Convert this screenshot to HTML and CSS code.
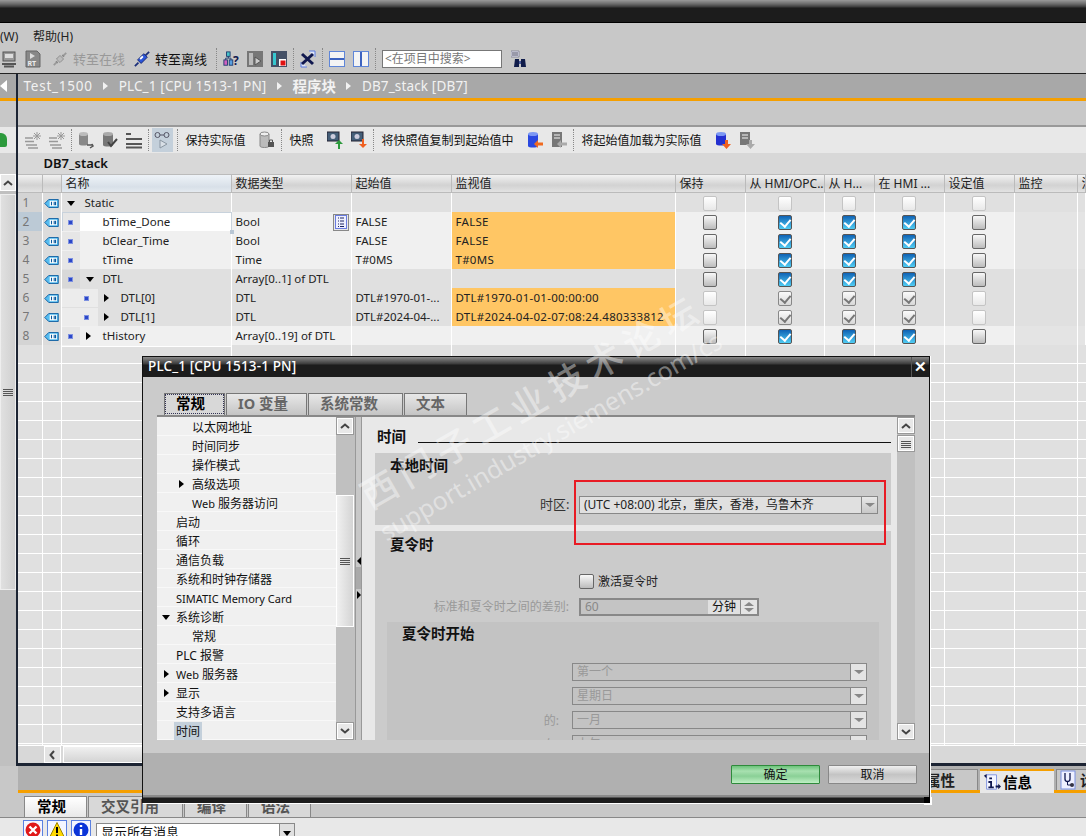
FILE: index.html
```html
<!DOCTYPE html>
<html lang="zh">
<head>
<meta charset="utf-8">
<title>DB7_stack</title>
<link rel="stylesheet" href="styles.css">
</head>
<body>
<svg class="sprite" aria-hidden="true">
  <symbol id="tag" viewBox="0 0 16 10"><path d="M.5 5 5 .5h10.500v9H5z" fill="#56bdf0" stroke="#0b5a9e"/><rect x="6" y="2" width="8" height="6" fill="#fff"/><path d="M8 3v4M11 3v4M12.500 3v4" stroke="#0b5a9e" stroke-width="1.200"/></symbol>
  <symbol id="save" viewBox="0 0 16 18"><rect x="2" y="2" width="12" height="9" fill="#999" stroke="#555"/><rect x="4" y="4" width="8" height="4" fill="#ddd"/><path d="M1 14h14M3 16.500h10" stroke="#555" stroke-width="2"/></symbol>
  <symbol id="rt" viewBox="0 0 16 18"><path d="M1 1h11l3 3v13H1z" fill="#888" stroke="#666"/><path d="M5 3l5 3-5 3z" fill="#ddd"/></symbol>
  <symbol id="plug-g" viewBox="0 0 18 18"><path d="M2 16l4-4M12 6l4-4" stroke="#999" stroke-width="2"/><path d="M5 9l4-4 4 4-4 4z" fill="#bbb" stroke="#888"/><path d="M6 12l-1 1M12 6l1-1" stroke="#888" stroke-width="3"/></symbol>
  <symbol id="plug-b" viewBox="0 0 18 18"><path d="M1 17l4-4M13 5l4-4" stroke="#1c2f7a" stroke-width="2"/><path d="M4 10l7-7 4 4-7 7z" fill="#2a54d8" stroke="#16246a"/><path d="M7 9l3-3" stroke="#fff" stroke-width="2"/></symbol>
  <symbol id="hier" viewBox="0 0 18 18"><rect x="4" y="1" width="4" height="5" fill="#46c2c8" stroke="#1d3a6e"/><rect x="1" y="10" width="4" height="6" fill="#d060c0" stroke="#1d3a6e"/><rect x="7" y="10" width="4" height="6" fill="#5aa0e0" stroke="#1d3a6e"/><path d="M6 6v2M3 10V8h6v2" stroke="#1d3a6e" fill="none"/></symbol>
  <symbol id="pane-g" viewBox="0 0 16 18"><rect width="16" height="16" y="1" fill="#777"/><rect x="2" y="3" width="4" height="12" fill="#bbb"/><path d="M8 7l6 4-6 4z" fill="#ccc" stroke="#555"/></symbol>
  <symbol id="pane-r" viewBox="0 0 16 18"><rect width="16" height="16" y="1" fill="#445066"/><rect x="2" y="3" width="3" height="12" fill="#36c8d0"/><rect x="8" y="9" width="7" height="7" fill="#fff"/><rect x="9.500" y="10.500" width="5" height="5" fill="#e01010"/></symbol>
  <symbol id="xwin" viewBox="0 0 16 18"><path d="M9 1h6v6M1 12v5h6" fill="#dfe6fa" stroke="#5a7adf"/><path d="M2 4l11 10M13 4 2 14" stroke="#10184f" stroke-width="3"/></symbol>
  <symbol id="hsplit" viewBox="0 0 16 18"><rect x=".5" y="1.500" width="15" height="15" fill="#f4f4f4" stroke="#5f86d8"/><path d="M1 9h14" stroke="#3d63c0" stroke-width="2"/></symbol>
  <symbol id="vsplit" viewBox="0 0 16 18"><rect x=".5" y="1.500" width="15" height="15" fill="#f4f4f4" stroke="#5f86d8"/><path d="M8 2v14" stroke="#3d63c0" stroke-width="2"/></symbol>
  <symbol id="binoc" viewBox="0 0 16 18"><path d="M0 1h8v6H0z" fill="#eef" stroke="#889"/><path d="M1 3h6M1 5h6" stroke="#445"/><path d="M4 9h4v8H3zM10 9h4l1 8h-5z" fill="#101c4a"/><path d="M8 11h2v3H8z" fill="#4a5a9a"/></symbol>
  <symbol id="spark" viewBox="0 0 16 18"><path d="M0 7h8M0 10.500h9M1 14h11M3 17h10" stroke="#999" stroke-width="1.500"/><path d="M12 1v8M8 5h8M9 2l6 6M15 2 9 8" stroke="#999"/></symbol>
  <symbol id="cyl-u" viewBox="0 0 16 18"><path d="M1 3v10c0 2 9 2 9 0V3z" fill="#888"/><ellipse cx="5.500" cy="3" rx="4.500" ry="2" fill="#bbb"/><path d="M9 14h5v-1l1 2-3 2" fill="none" stroke="#555" stroke-width="1.500"/></symbol>
  <symbol id="cyl-c" viewBox="0 0 16 18"><path d="M1 3v11c0 2 10 2 10 0V3z" fill="#777"/><ellipse cx="6" cy="3" rx="5" ry="2" fill="#aaa"/><path d="M6 11l3 4 6-7" fill="none" stroke="#444" stroke-width="2"/></symbol>
  <symbol id="lines" viewBox="0 0 16 18"><path d="M0 3h5M0 8h16M0 13h16M0 16.500h16" stroke="#555" stroke-width="1.800"/></symbol>
  <symbol id="glass" viewBox="0 0 16 18"><circle cx="3.500" cy="4" r="2.500" fill="none" stroke="#556"/><circle cx="12.500" cy="4" r="2.500" fill="none" stroke="#556"/><path d="M6 4h4" stroke="#556"/><path d="M6 9l7 4-7 4z" fill="#d8dfe6" stroke="#8a96a2"/></symbol>
  <symbol id="cyl-l" viewBox="0 0 16 18"><path d="M1 3v12c0 2 9 2 9 0V3z" fill="#bbb" stroke="#888"/><ellipse cx="5.500" cy="3" rx="4.500" ry="2" fill="#eee" stroke="#888"/><rect x="9" y="11" width="6" height="5" fill="#555"/><path d="M10.500 11V9h3v2" fill="none" stroke="#555"/></symbol>
  <symbol id="cam-u" viewBox="0 0 16 18"><rect y="1" width="12" height="9" fill="#445e78" stroke="#223"/><circle cx="6" cy="5.500" r="2.500" fill="#ccd"/><path d="M12 9l-4 4h3v5h2v-5h3z" fill="#2c9a3c"/></symbol>
  <symbol id="cam-d" viewBox="0 0 16 18"><rect y="1" width="12" height="9" fill="#445e78" stroke="#223"/><circle cx="6" cy="5.500" r="2.500" fill="#ccd"/><path d="M11 8h2v5h3l-4 4-4-4h3z" fill="#f06020"/></symbol>
  <symbol id="cyl-bl" viewBox="0 0 16 18"><path d="M1 3v12c0 2 10 2 10 0V3z" fill="#2a48e0"/><ellipse cx="6" cy="3" rx="5" ry="2" fill="#7c98f4"/><path d="M7 13l4-4v2.500h5v3h-5V17z" fill="#f06a20"/></symbol>
  <symbol id="cpu-gl" viewBox="0 0 16 18"><rect x="1" y="1" width="10" height="15" fill="#777"/><path d="M3 4h6M3 7h6" stroke="#ccc" stroke-width="1.500"/><path d="M6 13l4-4v2.500h6v3h-6V17z" fill="#aaa"/></symbol>
  <symbol id="cyl-bd" viewBox="0 0 16 18"><path d="M1 3v10c0 2 10 2 10 0V3z" fill="#2430d0"/><ellipse cx="6" cy="3" rx="5" ry="2" fill="#7c98f4"/><path d="M10 9h3v4h3l-4.500 5L7 13h3z" fill="#f06020"/></symbol>
  <symbol id="cpu-gd" viewBox="0 0 16 18"><rect x="1" y="1" width="10" height="13" fill="#777"/><path d="M3 4h6M3 7h6" stroke="#ccc" stroke-width="1.500"/><path d="M10 9h3v4h3l-4.500 5L7 13h3z" fill="#aaa"/></symbol>
  <symbol id="listb" viewBox="0 0 12 14"><rect x=".5" y=".5" width="11" height="13" fill="#eef0ff" stroke="#6a7ce0"/><path d="M3 3h1M5 3h4M3 6h1M5 6h4M3 9h1M5 9h4M3 11.500h1M5 11.500h4" stroke="#1c2460"/></symbol>
  <symbol id="info" viewBox="0 0 20 20"><path d="M4 2h11v16H4z" fill="#f4f6ff" stroke="#7a90e0"/><path d="M1 3l3-2v5zM14 14h3v-2l3 3-3 3v-2h-3zM7 5h3v2H7zM6 9h4v6h2v2H6v-2h2v-4H6z" fill="#10184f"/></symbol>
  <symbol id="diag" viewBox="0 0 18 20"><rect x="1" y="1" width="14" height="18" fill="#eef0ff" stroke="#7a90e0"/><path d="M5 3v6a2.500 2.500 0 0 0 5 0V3" fill="none" stroke="#10184f" stroke-width="1.300"/><path d="M7.500 12v3h4" fill="none" stroke="#10184f"/><circle cx="12" cy="15" r="2" fill="#334"/></symbol>
  <symbol id="err" viewBox="0 0 16 16"><circle cx="8" cy="8" r="7.500" fill="#e01818"/><path d="M4.500 4.500l7 7M11.500 4.500l-7 7" stroke="#fff" stroke-width="2.400"/></symbol>
  <symbol id="warn" viewBox="0 0 16 16"><path d="M8 .5 15.500 15.500H.5z" fill="#ffd900" stroke="#a08800"/><path d="M8 5v6M8 12.500v2" stroke="#000" stroke-width="2"/></symbol>
  <symbol id="inf" viewBox="0 0 16 16"><circle cx="8" cy="8" r="7.500" fill="#0a34d8"/><path d="M8 3v2M8 7v6" stroke="#fff" stroke-width="2.400"/></symbol>
  <symbol id="chev-u" viewBox="0 0 10 6"><path d="M1 5l4-3.500L9 5" fill="none" stroke="#444" stroke-width="2"/></symbol>
  <symbol id="chev-d" viewBox="0 0 10 6"><path d="M1 1l4 3.500L9 1" fill="none" stroke="#444" stroke-width="2"/></symbol>
  <symbol id="chev-l" viewBox="0 0 6 10"><path d="M5 1 1.500 5 5 9" fill="none" stroke="#444" stroke-width="2"/></symbol>
  <symbol id="grip" viewBox="0 0 10 8"><path d="M0 1.500h10M0 3.500h10M0 5.500h10M0 7.500h10" stroke="#555"/></symbol>
</svg>

<header class="titlebar"></header>
<nav class="menubar"><span class="menu-w">(W)</span><span class="menu-h">帮助(H)</span></nav>
<div class="maintools">
  <svg class="ic ml2"><use href="#save"/></svg>
  <svg class="ic"><use href="#rt"/><text x="2.500" y="16" class="svgt">RT</text></svg>
  <svg class="ic ml3"><use href="#plug-g"/></svg>
  <span class="tt dim">转至在线</span>
  <svg class="ic ml1"><use href="#plug-b"/></svg>
  <span class="tt">转至离线</span>
  <i class="sep"></i>
  <svg class="ic"><use href="#hier"/><text x="10" y="15" class="svgq">?</text></svg>
  <svg class="ic"><use href="#pane-g"/></svg>
  <svg class="ic"><use href="#pane-r"/></svg>
  <i class="sep"></i>
  <svg class="ic"><use href="#xwin"/></svg>
  <i class="sep"></i>
  <svg class="ic"><use href="#hsplit"/></svg>
  <svg class="ic"><use href="#vsplit"/></svg>
  <i class="sep"></i>
  <div class="search">&lt;在项目中搜索&gt;</div>
  <svg class="ic"><use href="#binoc"/></svg>
</div>

<div class="work">
  <aside class="rail">
    <div class="rail-crumb"><i class="tri-l"></i></div>
    <div class="rail-band"></div>
    <div class="rail-tools"><i class="rail-green"></i></div>
    <div class="rail-name"></div>
    <div class="rail-btn"><svg class="chev"><use href="#chev-u"/></svg></div>
    <div class="rail-thumb"><svg class="grip"><use href="#grip"/></svg></div>
  </aside>
  <main class="editor">
    <div class="crumb">
      <span class="crumb-first">Test_1500</span><i class="tri-w"></i>
      <span>PLC_1 [CPU 1513-1 PN]</span><i class="tri-w"></i>
      <span class="crumb-cn">程序块</span><i class="tri-w"></i>
      <span>DB7_stack [DB7]</span>
    </div>
    <div class="band"></div>
    <div class="edtools">
      <svg class="ic"><use href="#spark"/></svg>
      <svg class="ic"><use href="#spark"/></svg>
      <i class="sep"></i>
      <svg class="ic"><use href="#cyl-u"/></svg>
      <svg class="ic"><use href="#cyl-c"/></svg>
      <svg class="ic"><use href="#lines"/></svg>
      <i class="sep"></i>
      <span class="active-btn"><svg class="ic"><use href="#glass"/></svg></span>
      <i class="sep"></i>
      <span class="et">保持实际值</span>
      <svg class="ic ml4"><use href="#cyl-l"/></svg>
      <i class="sep"></i>
      <span class="et">快照</span>
      <svg class="ic ml4"><use href="#cam-u"/></svg>
      <svg class="ic"><use href="#cam-d"/></svg>
      <i class="sep"></i>
      <span class="et">将快照值复制到起始值中</span>
      <svg class="ic ml4"><use href="#cyl-bl"/></svg>
      <svg class="ic"><use href="#cpu-gl"/></svg>
      <i class="sep"></i>
      <span class="et">将起始值加载为实际值</span>
      <svg class="ic ml4"><use href="#cyl-bd"/></svg>
      <svg class="ic"><use href="#cpu-gd"/></svg>
    </div>
    <div class="dbname">DB7_stack</div>

    <div class="table">
      <div class="row head">
        <div></div><div></div><div class="hl">名称</div><div>数据类型</div><div>起始值</div><div>监视值</div><div>保持</div><div>从 HMI/OPC...</div><div>从 H...</div><div>在 HMI ...</div><div>设定值</div><div>监控</div><div>注</div>
      </div>
      <div class="row dark">
        <div class="no">1</div><div class="tg"><svg class="tag"><use href="#tag"/></svg></div>
        <div class="n"><span class="slot"><i class="tri-d"></i></span><span class="t0">Static</span></div>
        <div></div><div></div><div></div>
        <div class="c"><b class="cb off"></b></div><div class="c"><b class="cb off"></b></div><div class="c"><b class="cb off"></b></div><div class="c"><b class="cb off"></b></div><div class="c"><b class="cb off"></b></div><div></div><div></div>
      </div>
      <div class="row light sel">
        <div class="no">2</div><div class="tg"><svg class="tag"><use href="#tag"/></svg></div>
        <div class="n focus"><span class="slot sq"><i class="dot"></i></span><span class="t1">bTime_Done</span><i class="handle"></i></div>
        <div class="ty"><span>Bool</span><span class="pick"><svg class="listb"><use href="#listb"/></svg></span></div><div>FALSE</div><div class="mon">FALSE</div>
        <div class="c"><b class="cb"></b></div><div class="c"><b class="cb on"></b></div><div class="c"><b class="cb on"></b></div><div class="c"><b class="cb on"></b></div><div class="c"><b class="cb"></b></div><div class="x"></div><div class="x"></div>
      </div>
      <div class="row light">
        <div class="no">3</div><div class="tg"><svg class="tag"><use href="#tag"/></svg></div>
        <div class="n"><span class="slot sq"><i class="dot"></i></span><span class="t1">bClear_Time</span></div>
        <div>Bool</div><div>FALSE</div><div class="mon">FALSE</div>
        <div class="c"><b class="cb"></b></div><div class="c"><b class="cb on"></b></div><div class="c"><b class="cb on"></b></div><div class="c"><b class="cb on"></b></div><div class="c"><b class="cb"></b></div><div class="x"></div><div class="x"></div>
      </div>
      <div class="row light">
        <div class="no">4</div><div class="tg"><svg class="tag"><use href="#tag"/></svg></div>
        <div class="n"><span class="slot sq"><i class="dot"></i></span><span class="t1">tTime</span></div>
        <div>Time</div><div>T#0MS</div><div class="mon">T#0MS</div>
        <div class="c"><b class="cb"></b></div><div class="c"><b class="cb on"></b></div><div class="c"><b class="cb on"></b></div><div class="c"><b class="cb on"></b></div><div class="c"><b class="cb"></b></div><div class="x"></div><div class="x"></div>
      </div>
      <div class="row dark">
        <div class="no">5</div><div class="tg"><svg class="tag"><use href="#tag"/></svg></div>
        <div class="n"><span class="slot sq"><i class="dot"></i></span><span class="tw"><i class="tri-d"></i></span><span class="t2">DTL</span></div>
        <div>Array[0..1] of DTL</div><div></div><div></div>
        <div class="c"><b class="cb"></b></div><div class="c"><b class="cb on"></b></div><div class="c"><b class="cb on"></b></div><div class="c"><b class="cb on"></b></div><div class="c"><b class="cb"></b></div><div></div><div></div>
      </div>
      <div class="row dark">
        <div class="no">6</div><div class="tg"><svg class="tag"><use href="#tag"/></svg></div>
        <div class="n"><span class="slot deep"><i class="dot"></i></span><span class="tw"><i class="tri-r"></i></span><span class="t2">DTL[0]</span></div>
        <div>DTL</div><div>DTL#1970-01-...</div><div class="mon">DTL#1970-01-01-00:00:00</div>
        <div class="c"><b class="cb off"></b></div><div class="c"><b class="cb tick"></b></div><div class="c"><b class="cb tick"></b></div><div class="c"><b class="cb tick"></b></div><div class="c"><b class="cb off"></b></div><div></div><div></div>
      </div>
      <div class="row dark">
        <div class="no">7</div><div class="tg"><svg class="tag"><use href="#tag"/></svg></div>
        <div class="n"><span class="slot deep"><i class="dot"></i></span><span class="tw"><i class="tri-r"></i></span><span class="t2">DTL[1]</span></div>
        <div>DTL</div><div>DTL#2024-04-...</div><div class="mon">DTL#2024-04-02-07:08:24.480333812</div>
        <div class="c"><b class="cb off"></b></div><div class="c"><b class="cb tick"></b></div><div class="c"><b class="cb tick"></b></div><div class="c"><b class="cb tick"></b></div><div class="c"><b class="cb off"></b></div><div></div><div></div>
      </div>
      <div class="row light">
        <div class="no">8</div><div class="tg"><svg class="tag"><use href="#tag"/></svg></div>
        <div class="n"><span class="slot sq"><i class="dot"></i></span><span class="tw"><i class="tri-r"></i></span><span class="t2">tHistory</span></div>
        <div>Array[0..19] of DTL</div><div></div><div></div>
        <div class="c"><b class="cb"></b></div><div class="c"><b class="cb on"></b></div><div class="c"><b class="cb on"></b></div><div class="c"><b class="cb on"></b></div><div class="c"><b class="cb"></b></div><div class="x"></div><div class="x"></div>
      </div>
      <div class="filler"></div>
    </div>
    <div class="hscroll"><span class="hbtn"><svg class="chev-l"><use href="#chev-l"/></svg></span><span class="hthumb"></span></div>
  </main>
</div>

<section class="bottom">
  <div class="btabs-top">
    <span class="rtab first">属性</span>
    <span class="rtab cur"><svg class="rtab-ic"><use href="#info"/></svg>信息</span>
    <span class="rtab last"><svg class="rtab-ic"><use href="#diag"/></svg>诊断</span>
  </div>
  <div class="btabs">
    <span class="btab cur">常规</span><span class="btab w95">交叉引用</span><span class="btab">编译</span><span class="btab">语法</span>
  </div>
  <div class="filter">
    <span class="fbtn"><svg class="fic"><use href="#err"/></svg></span>
    <span class="fbtn"><svg class="fic"><use href="#warn"/></svg></span>
    <span class="fbtn"><svg class="fic"><use href="#inf"/></svg></span>
    <span class="fsel">显示所有消息</span><span class="farrow"><i class="tri-d"></i></span>
  </div>
</section>

<div class="dialog">
  <div class="dlg-title"><span>PLC_1 [CPU 1513-1 PN]</span><span class="dlg-x">✕</span></div>
  <div class="dlg-tabs">
    <span class="dtab cur">常规</span><span class="dtab w81">IO 变量</span><span class="dtab w95">系统常数</span><span class="dtab w63">文本</span>
  </div>
  <div class="dlg-body">
    <ul class="tree">
      <li class="l2">以太网地址</li>
      <li class="l2">时间同步</li>
      <li class="l2">操作模式</li>
      <li class="l2"><i class="tri-r"></i>高级选项</li>
      <li class="l2"><span class="lat">Web</span> 服务器访问</li>
      <li class="l1">启动</li>
      <li class="l1">循环</li>
      <li class="l1">通信负载</li>
      <li class="l1">系统和时钟存储器</li>
      <li class="l1 lat">SIMATIC Memory Card</li>
      <li class="l1"><i class="tri-d"></i>系统诊断</li>
      <li class="l2">常规</li>
      <li class="l1">PLC 报警</li>
      <li class="l1"><i class="tri-r"></i><span class="lat">Web</span> 服务器</li>
      <li class="l1"><i class="tri-r"></i>显示</li>
      <li class="l1">支持多语言</li>
      <li class="l1"><span class="cursel">时间</span></li>
    </ul>
    <div class="vscroll tree-scroll">
      <span class="sbtn"><svg class="chev"><use href="#chev-u"/></svg></span>
      <span class="sthumb"><svg class="grip"><use href="#grip"/></svg></span>
      <span class="sbtn"><svg class="chev"><use href="#chev-d"/></svg></span>
    </div>
    <div class="splitter"><i class="s-l"></i><i class="s-line"></i><i class="s-r"></i></div>
    <div class="content">
      <div class="heading"><span>时间</span><i></i></div>
      <div class="sec sec1">
        <h3>本地时间</h3>
        <div class="tzrow"><label>时区:</label><div class="drop tz"><span class="dtext">(UTC +08:00) 北京，重庆，香港，乌鲁木齐</span><span class="darrow"><i class="tri-g"></i></span></div></div>
      </div>
      <div class="sec sec2">
        <h3>夏令时</h3>
        <div class="dstrow"><b class="cb big"></b><span>激活夏令时</span></div>
        <div class="diffrow"><label>标准和夏令时之间的差别:</label><div class="spin"><span class="val">60</span><span class="unit">分钟</span><span class="updown"><i class="tri-gu"></i><i class="tri-g"></i></span></div></div>
        <div class="sub">
          <h3>夏令时开始</h3>
          <div class="drow"><div class="drop dis"><span class="dtext">第一个</span><span class="darrow"><i class="tri-g"></i></span></div></div>
          <div class="drow"><div class="drop dis"><span class="dtext">星期日</span><span class="darrow"><i class="tri-g"></i></span></div></div>
          <div class="drow"><label>的:</label><div class="drop dis"><span class="dtext">一月</span><span class="darrow"><i class="tri-g"></i></span></div></div>
          <div class="drow"><label>在:</label><div class="drop dis"><span class="dtext">上午</span><span class="darrow"><i class="tri-g"></i></span></div></div>
        </div>
      </div>
    </div>
    <div class="vscroll cont-scroll">
      <span class="sbtn"><svg class="chev"><use href="#chev-u"/></svg></span>
      <span class="sbtn"><svg class="grip"><use href="#grip"/></svg></span>
      <span class="sfill"></span>
      <span class="sbtn"><svg class="chev"><use href="#chev-d"/></svg></span>
    </div>
  </div>
  <div class="dlg-gap"></div>
  <div class="dlg-foot"><span class="btn ok">确定</span><span class="btn">取消</span></div>
  <div class="dlg-bar"></div>
  <i class="resize"></i>
</div>

<div class="redbox"></div>
<div class="wm wm-cn">西门子工业 技术论坛</div>
<div class="wm wm-en">support.industry.siemens.com/cs</div>
</body>
</html>
```
FILE: styles.css
```css
*{box-sizing:border-box}
html,body{margin:0;height:836px;overflow:hidden}
body{position:relative;width:1086px;background:#c8c8c8;font:11.5px/19px "Noto Sans","Noto Sans CJK SC",sans-serif;color:#222;display:flex;flex-direction:column}
.sprite{position:absolute;width:0;height:0}
i,b{font-style:normal;font-weight:normal}
h3{margin:0;font-size:14.500px;font-weight:700;color:#111;line-height:20px}
ul{margin:0;padding:0;list-style:none}
.svgt{font:bold 7px "Noto Sans",sans-serif;fill:#eee}
.svgq{font:bold 12px "Noto Sans",sans-serif;fill:#10184f}

.titlebar{height:23px;flex:none;background:linear-gradient(#9a9a9a 0,#6a6a6a 4px,#3a3a3a 7px,#1c1c1c 8px);border-bottom:1px solid #000}
.menubar{height:24px;flex:none;display:flex;align-items:center;font-size:12px;color:#222;padding-top:3px}
.menu-w{width:33px}
.maintools{height:27px;flex:none;display:flex;align-items:center;gap:8px;border-bottom:1px solid #222;padding-bottom:2px}
.ic{width:16px;height:18px;flex:none}
.ml1{margin-left:-2px}.ml2{margin-left:1px}.ml3{margin-left:3px}.ml4{margin-left:4px}
.tt{font-size:13px;color:#111;width:52px;margin:0 3px 0 -3px;white-space:nowrap}
.dim{color:#999}
.sep{width:1px;height:22px;flex:none;margin:0 -2px;border-left:1px dotted #888}
.search{width:120px;height:18px;background:#fff;border:1px solid #777;font-size:12px;line-height:16px;color:#777;padding-left:2px;margin-right:1px;white-space:nowrap}

.work{height:692px;flex:none;display:flex}
.rail{width:17.500px;flex:none;border-right:2.500px solid #1c2433;background:#c0c0c0;display:flex;flex-direction:column}
.rail-crumb{height:24px;background:#a8a8a8;display:flex;align-items:center}
.rail-band{height:29px;background:#c8c8c8;border-top:3px solid #f59f00}
.rail-tools{height:26px;background:#e8e8e8;position:relative;overflow:hidden}
.rail-green{position:absolute;left:-6px;top:6px;width:13px;height:14px;background:#2c9a3c;border-radius:6px 6px 2px 2px}
.rail-name{height:21px;background:#d0d0d0}
.rail-btn{height:17px;background:#e8e8e8;border:1px solid #fff;display:flex;align-items:center;justify-content:center}
.rail-thumb{margin-top:3px;height:396px;border:1px solid #eee;background:linear-gradient(90deg,#e0e0e0,#d0d0d0);display:flex;align-items:center;justify-content:center}
.chev{width:10px;height:6px}
.chev-l{width:6px;height:10px}
.grip{width:10px;height:8px}
.tri-l{border:solid transparent;border-width:6px 7px 6px 0;border-right-color:#fff}

.editor{flex:1;min-width:0;display:flex;flex-direction:column}
.crumb{height:24px;flex:none;background:#a8a8a8;color:#f2f2f2;font-size:13.500px;letter-spacing:.15px;line-height:24px;display:flex;align-items:center;padding-left:6px;white-space:nowrap}
.crumb-first{letter-spacing:.75px}
.crumb-cn{font-weight:700;font-size:14.500px;letter-spacing:0}
.tri-w{border:solid transparent;border-width:4px 0 4px 5px;border-left-color:#f2f2f2;margin:0 10.500px}
.band{height:29px;flex:none;background:#c8c8c8;border-top:3px solid #f59f00;border-bottom:2px solid #999}
.edtools{height:26px;flex:none;background:#e8e8e8;display:flex;align-items:center;gap:8px;padding-left:7px}
.active-btn{width:21px;height:24px;background:#c4d0db;display:flex;align-items:center;justify-content:center;margin:0 -2px 0 -3px}
.et{font-size:12px;white-space:nowrap;color:#111;margin:0 1px 0 2px}
.dbname{height:21px;flex:none;background:#d8d8d8;font-size:13px;font-weight:600;color:#111;line-height:20px;padding-left:26px}

.table{flex:1;min-height:0;overflow:hidden;background:#e0e0e0;display:flex;flex-direction:column}
.row{height:19px;flex:none;display:grid;grid-template-columns:25px 19px 170px 120px 100px 224px 70px 79px 50px 70px 70px 63px 1fr;line-height:20px}
.row>div{border-right:1px solid #fff;border-bottom:1px solid #fff;padding-left:4px;white-space:nowrap;overflow:hidden;min-width:0}
.head{height:19px;font-size:12px;color:#222}
.head>div{background:linear-gradient(#f2f2f2,#d2d2d2 60%,#e2e2e2);border-right-color:#bbb;border-bottom-color:#bbb;border-top:1px solid #bbb;line-height:17px}
.head>.hl{background:linear-gradient(#eef3f8,#d8e0e8 70%,#e4eaf0);padding-left:4px}
.dark>div{background:#e0e0e0}
.light>div{background:#f0f0f0}
.light>.x{background:#e4e4e4}
.row>.no{background:#d4d4d4;color:#777;padding-left:5px;font-size:12px}
.sel>.no{background:#bccad6}
.row>.tg{background:#dcdcdc;padding:6px 0 0 1px}
.tag{width:15px;height:9px;display:block}
.row>.n{display:flex;align-items:center;padding:0;overflow:visible;position:relative}
.slot{width:18px;height:18px;flex:none;display:flex;align-items:center;justify-content:center}
.sq{background:#e6e6e6}
.dark .sq{background:#d8d8d8}
.deep{width:36px;background:#ececec;justify-content:flex-end;padding-right:8px}
.dot{width:5px;height:5px;background:#2b47c8;border:1px solid #7d90e0;margin-right:1px}
.tw{width:5px;flex:none;margin-left:6px;display:flex}
.t0{margin-left:5px}
.t1{margin-left:5px;padding-left:18px}
.t2{margin-left:12px}
.tri-d{border:solid transparent;border-width:5px 4px 0;border-top-color:#000;display:block}
.tri-r{border:solid transparent;border-width:4px 0 4px 5px;border-left-color:#000;display:block}
.row>.focus{background:#fff;outline:1px solid #c8d2dc;outline-offset:-1px}
.handle{position:absolute;right:-3px;bottom:-2px;width:4px;height:4px;background:#b8c6d4;z-index:1}
.ty{display:flex;align-items:center;justify-content:space-between;padding-right:2px}
.pick{width:16px;height:17px;border:1px solid #888;background:#e8e8e8;display:flex;align-items:center;justify-content:center}
.listb{width:12px;height:14px}
.row>.mon{background:#ffc664;letter-spacing:.27px}
.row>.c{padding:1px 0 0;display:flex;align-items:center;justify-content:center}
.cb{display:block;width:14px;height:15px;border:1px solid #666;border-radius:2px;background:linear-gradient(#f8f8f8,#bcbcbc);position:relative}
.cb.off{border-color:#c4c4c4;background:linear-gradient(#fff,#e8e8e8)}
.cb.on{border-color:#555;background:linear-gradient(#0f62b4,#50cdf4)}
.cb.tick{border-color:#888;background:linear-gradient(#fafafa,#d8d8d8)}
.cb.on::after,.cb.tick::after{content:"";position:absolute;left:3px;top:1px;width:5px;height:8px;border:solid #fff;border-width:0 2px 2px 0;transform:rotate(40deg)}
.cb.tick::after{border-color:#777}
.cb.big{width:15px;height:15px}
.filler{flex:1;background:
  linear-gradient(#fff,#fff) 24px 0/1px 100% no-repeat,
  linear-gradient(#fff,#fff) 43px 0/1px 100% no-repeat,
  linear-gradient(#fff,#fff) 213px 0/1px 100% no-repeat,
  linear-gradient(#fff,#fff) 333px 0/1px 100% no-repeat,
  linear-gradient(#fff,#fff) 433px 0/1px 100% no-repeat,
  linear-gradient(#fff,#fff) 657px 0/1px 100% no-repeat,
  linear-gradient(#fff,#fff) 727px 0/1px 100% no-repeat,
  linear-gradient(#fff,#fff) 806px 0/1px 100% no-repeat,
  linear-gradient(#fff,#fff) 856px 0/1px 100% no-repeat,
  linear-gradient(#fff,#fff) 926px 0/1px 100% no-repeat,
  linear-gradient(#fff,#fff) 996px 0/1px 100% no-repeat,
  linear-gradient(#fff,#fff) 1059px 0/1px 100% no-repeat,
  repeating-linear-gradient(#e0e0e0 0 18px,#fff 18px 19px)}
.hscroll{height:21px;flex:none;background:#d8d8d8;border-top:1px solid #fff;border-bottom:3px solid #1c2433;display:flex;padding-left:26px;gap:2px}
.hbtn{width:17px;height:17px;background:#e4e4e4;border:1px solid #fff;display:flex;align-items:center;justify-content:center}
.hthumb{width:300px;height:17px;background:linear-gradient(#f0f0f0,#d4d4d4);border:1px solid #fff}

.bottom{height:70px;flex:none;background:#c8c8c8;display:flex;flex-direction:column}
.btabs-top{height:27px;flex:none;margin-left:18px;background:#b0b0b0;border-bottom:3px solid #f59f00;display:flex;justify-content:flex-end;align-items:flex-end;gap:2px;padding-top:3px}
.rtab{height:21px;width:74px;background:#c8c8c8;border:1px solid #888;border-bottom:0;font-size:14.500px;font-weight:700;display:flex;align-items:center;gap:2px;padding-left:3px;color:#222;overflow:hidden;white-space:nowrap;flex:none}
.rtab.first{width:70px;padding-left:17px}
.rtab.last{width:75px;margin-right:-45px}
.rtab.cur{height:24px;margin-bottom:-3px;background:#e8e8e8;border:0;border-top:2px solid #f59f00;color:#000}
.rtab-ic{width:18px;height:20px;flex:none}
.btabs{height:24px;flex:none;display:flex;padding:3px 0 0 24px;gap:1px}
.btab{width:63px;height:21px;background:#d8d8d8;border:1px solid #888;border-bottom:0;font-size:14.500px;font-weight:700;padding-left:12px;color:#555;line-height:18px}
.btab.w95{width:95px}
.btab.cur{background:linear-gradient(#fff,#e8e8e8);color:#000}
.filter{flex:1;background:#e8e8e8;border-top:1px solid #888;display:flex;gap:4px;padding:2px 0 0 23px}
.fbtn{width:20px;height:20px;border:1px solid #5a80e0;background:#f4f6ff;display:flex;align-items:center;justify-content:center;flex:none}
.fic{width:16px;height:16px}
.fsel{width:184px;height:20px;margin:3px 0 0 1px;background:#fff;border:1px solid #888;font-size:13px;line-height:16px;padding-left:4px;color:#111;white-space:nowrap}
.farrow{width:16px;height:20px;margin:3px 0 0 -5px;background:#e0e0e0;border:1px solid #888;display:flex;align-items:center;justify-content:center}

.dialog{position:absolute;left:142px;top:356px;width:788px;height:448px;background:#cbcbcb;border:1px solid #111;border-bottom-color:#fff;box-shadow:1px 0 #fff;display:flex;flex-direction:column}
.dlg-title{height:20px;flex:none;background:linear-gradient(#8a8a8a 0,#3a3a3a 7px,#1c1c1c 8px);color:#fff;font-size:13.500px;letter-spacing:.15px;font-weight:500;line-height:19px;padding-left:5px;display:flex;justify-content:space-between}
.dlg-x{width:18px;border-left:1px solid #555;font-size:15px;font-weight:700;text-align:center}
.dlg-tabs{height:38px;flex:none;display:flex;align-items:flex-end;padding-left:21px;gap:1px}
.dtab{width:61px;height:22px;background:linear-gradient(#e8e8e8,#c4c4c4);border:1px solid #777;border-bottom:0;font-size:14.500px;font-weight:700;color:#666;padding-left:11px;line-height:19px;white-space:nowrap}
.dtab.cur{background:#d8d8d8;color:#000;outline:1px dotted #335;outline-offset:-2px}
.w81{width:81px}.dtab.w95{width:95px}.w63{width:63px}
.dlg-body{height:325px;flex:none;margin:0 14px;width:758px;border-top:2px solid #888;display:flex;overflow:hidden}
.tree{width:179px;flex:none;background:#f0f0f0;font-size:12px;color:#111}
.tree li{height:19px;border-bottom:1px solid #f8f8f8;line-height:21px;white-space:nowrap;position:relative}
.tree .lat{font-size:11px}
.tree .l1{padding-left:19px}
.tree .l2{padding-left:35px}
.tree .tri-r,.tree .tri-d{position:absolute;top:6px}
.tree .l2 .tri-r{left:22px}
.tree .l1 .tri-r{left:7px}
.tree .l1 .tri-d{left:5px;top:8px}
.cursel{background:#c4d0db;display:inline-block;height:18px;line-height:19px;padding:0 2px;margin-left:-2px}
.vscroll{width:18px;flex:none;background:#c0c0c0;display:flex;flex-direction:column}
.sbtn{height:18px;flex:none;background:#e8e8e8;border:1px solid #999;outline:1px solid #fff;outline-offset:-2px;display:flex;align-items:center;justify-content:center}
.tree-scroll{width:19px;justify-content:space-between;padding-right:1px}
.sthumb{height:132px;margin-top:59px;margin-bottom:95px;background:linear-gradient(90deg,#f0f0f0,#d4d4d4);border:1px solid #fff;display:flex;align-items:center;justify-content:center;flex:none}
.splitter{width:7px;flex:none;background:#c8c8c8;border:solid #999;border-width:0 1px;display:flex;flex-direction:column;align-items:center;padding-top:140px}
.s-l{border:solid transparent;border-width:4px 4px 4px 0;border-right-color:#000;display:block}
.s-line{display:block;width:5px;height:22px;margin:2px 0;background:#aaa}
.s-r{border:solid transparent;border-width:4px 0 4px 4px;border-left-color:#000;display:block}
.content{width:535px;flex:none;background:#e8e8e8;padding:0 6px 0 13px;overflow:hidden}
.heading{height:36px;display:flex;align-items:flex-end;padding-bottom:7px;font-size:14.500px;font-weight:700;color:#111;line-height:20px;padding-left:2px}
.heading i{flex:1;height:1px;background:#111;margin:0 0 0 12px;position:relative;top:-3px}
.sec{background:#cbcbcb}
.sec h3{padding-left:15px}
.sec1{height:72px;padding-top:2px;margin-bottom:6px}
.sec1 .tzrow{margin-top:20px}
.tzrow{display:flex;align-items:center;padding-left:165px;font-size:13px;color:#333}
.tzrow label{width:39px}
.drop{height:18px;background:#e0e0e0;border:1px solid #888;display:flex;align-items:stretch;font-size:12px}
.tz{width:299px}
.dtext{flex:1;padding-left:4px;line-height:16px;white-space:nowrap;color:#222}
.darrow{width:16px;flex:none;background:linear-gradient(#e8e8e8,#c8c8c8);border-left:1px solid #888;display:flex;align-items:center;justify-content:center}
.tri-g{border:solid transparent;border-width:4px 5px 0;border-top-color:#888;display:block}
.tri-gu{border:solid transparent;border-width:0 5px 4px;border-bottom-color:#888;display:block;margin-bottom:2px}
.sec2{height:300px;padding-top:3px}
.dstrow{display:flex;align-items:center;gap:4px;padding-left:204px;margin-top:19px;font-size:12px;height:17px;color:#222}
.diffrow{display:flex;align-items:center;margin-top:7px;font-size:12px;color:#999}
.diffrow label{width:194px;text-align:right;margin-right:10px;white-space:nowrap}
.spin{width:180px;height:18px;border:2px solid #888;display:flex;background:#c4c4c4;color:#888}
.val{flex:1;padding-left:4px;line-height:14px}
.unit{width:32px;background:#e0e0e0;color:#111;text-align:center;line-height:14px;font-size:12px}
.updown{width:17px;background:#e4e4e4;border-left:1px solid #888;display:flex;flex-direction:column;align-items:center;justify-content:center}
.sub{margin:6px 12px 0;height:140px;background:#c3c3c3;padding-top:1px}
.sub h3{padding-left:15px;margin-bottom:20px}
.drow{display:flex;justify-content:flex-end;align-items:center;margin-bottom:6px;padding-right:12px;color:#999;font-size:12px;position:relative}
.drow label{position:absolute;right:320px}
.drop.dis{width:295px;background:#c3c3c3;color:#888}
.dis .dtext{color:#999}
.dis .darrow{background:#e4e4e4}
.cont-scroll{gap:1px}
.sfill{flex:1}
.cont-scroll .sbtn{height:17px}
.dlg-gap{height:13px;flex:none}
.dlg-foot{height:42px;flex:none;background:#b0b0b0;display:flex;justify-content:flex-end;align-items:flex-start;gap:8px;padding:12px 12px 0 0}
.btn{width:89px;height:19px;border:1px solid #888;background:linear-gradient(#f0f0f0,#c4c4c4 50%,#d8d8d8);font-size:12px;line-height:17px;text-align:center;color:#111;border-radius:1px}
.btn.ok{background:linear-gradient(#6cc47a,#a8e0b0 30%,#8ad096 60%,#bff0c4);border-color:#2f8a3c}
.dlg-bar{flex:1;background:linear-gradient(#8a8a8a 0,#8a8a8a 2px,#1c1c1c 3px)}
.resize{position:absolute;right:-3px;bottom:-2px;width:8px;height:8px;border:solid #fff;border-width:0 2px 2px 0;background:#000}

.redbox{position:absolute;left:574px;top:480px;width:312px;height:65px;border:2px solid #e81b24}
.wm{position:absolute;color:rgba(255,255,255,.42);white-space:nowrap;transform-origin:0 100%;transform:rotate(-30deg);pointer-events:none}
.wm-cn{left:375px;top:474px;font-size:36px;font-weight:500;line-height:44px;letter-spacing:7px;word-spacing:-15px}
.wm-en{left:389px;top:516px;font-size:25px;line-height:30px}
```
